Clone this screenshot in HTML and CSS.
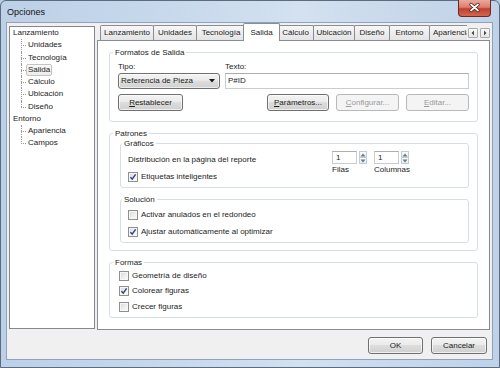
FILE: index.html
```html
<!DOCTYPE html>
<html lang="es">
<head>
<meta charset="utf-8">
<title>Opciones</title>
<link rel="stylesheet" href="styles.css">
</head>
<body>
<div class="window">
  <div class="titlebar">
    <span class="title">Opciones</span>
    <div class="close">
      <svg width="31" height="16" viewBox="0 0 31 16"><path d="M12 4.5 L19 10.5 M19 4.5 L12 10.5" stroke="#4a1a14" stroke-width="3.4" stroke-linecap="round"/><path d="M12 4.5 L19 10.5 M19 4.5 L12 10.5" stroke="#fff" stroke-width="1.8" stroke-linecap="round"/></svg>
    </div>
  </div>
  <div class="client">
    <div class="main">
      <div class="tree">
        <div class="node">Lanzamiento</div>
        <ul class="children">
          <li>Unidades</li>
          <li>Tecnología</li>
          <li><span class="sel">Salida</span></li>
          <li>Cálculo</li>
          <li>Ubicación</li>
          <li>Diseño</li>
        </ul>
        <div class="node">Entorno</div>
        <ul class="children">
          <li>Apariencia</li>
          <li>Campos</li>
        </ul>
      </div>
      <div class="tabctl">
        <div class="tabstrip">
          <div class="tabs">
            <div class="tab t-lan">Lanzamiento</div>
            <div class="tab t-uni">Unidades</div>
            <div class="tab t-tec">Tecnología</div>
            <div class="tab t-sal active">Salida</div>
            <div class="tab t-cal">Cálculo</div>
            <div class="tab t-ubi">Ubicación</div>
            <div class="tab t-dis">Diseño</div>
            <div class="tab t-ent">Entorno</div>
            <div class="tab t-apa">Apariencia</div>
          </div>
          <div class="scroll">
            <span class="sbtn"><svg width="8" height="8" viewBox="0 0 8 8"><path d="M5 1.5 L2.5 4 L5 6.5z" fill="#4a4a4a"/></svg></span>
            <span class="sbtn"><svg width="8" height="8" viewBox="0 0 8 8"><path d="M3 1.5 L5.5 4 L3 6.5z" fill="#4a4a4a"/></svg></span>
          </div>
        </div>
        <div class="panel">
          <div class="group g-formatos">
            <span class="gtitle">Formatos de Salida</span>
            <div class="row-labels">
              <span class="lbl-tipo">Tipo:</span>
              <span>Texto:</span>
            </div>
            <div class="row-inputs">
              <div class="combo">
                <span>Referencia de Pieza</span>
                <svg width="6" height="4" viewBox="0 0 6 4"><path d="M0 0 H6 L3 3.5z" fill="#1a1a1a"/></svg>
              </div>
              <div class="textbox">P#ID</div>
            </div>
            <div class="row-buttons">
              <div class="btn b-reset"><u>R</u>establecer</div>
              <div class="btn b-param"><u>P</u>arámetros...</div>
              <div class="btn disabled b-conf"><u>C</u>onfigurar...</div>
              <div class="btn disabled b-edit"><u>E</u>ditar...</div>
            </div>
          </div>

          <div class="group g-patrones">
            <span class="gtitle">Patrones</span>
            <div class="group g-graficos">
              <span class="gtitle">Gráficos</span>
              <div class="dist">
                <div>Distribución en la página del reporte</div>
                <div class="cbrow r-etiq">
                  <span class="cb checked"><svg width="8" height="8" viewBox="0 0 8 8"><path d="M1.4 4.1 L3.2 6.1 L6.6 1.4" fill="none" stroke="#2c3f7c" stroke-width="1.4"/></svg></span>
                  <span>Etiquetas inteligentes</span>
                </div>
              </div>
              <div class="spins">
                <div class="spin-group">
                  <div class="spinbox">
                    <div class="spin-input">1</div>
                    <div class="spin-arrows">
                      <span><svg width="6" height="4" viewBox="0 0 6 4"><path d="M3 0.5 L5.5 3.5 H0.5z" fill="#6a7a8c"/></svg></span>
                      <span><svg width="6" height="4" viewBox="0 0 6 4"><path d="M3 3.5 L5.5 0.5 H0.5z" fill="#6a7a8c"/></svg></span>
                    </div>
                  </div>
                  <div class="spin-label">Filas</div>
                </div>
                <div class="spin-group">
                  <div class="spinbox">
                    <div class="spin-input">1</div>
                    <div class="spin-arrows">
                      <span><svg width="6" height="4" viewBox="0 0 6 4"><path d="M3 0.5 L5.5 3.5 H0.5z" fill="#6a7a8c"/></svg></span>
                      <span><svg width="6" height="4" viewBox="0 0 6 4"><path d="M3 3.5 L5.5 0.5 H0.5z" fill="#6a7a8c"/></svg></span>
                    </div>
                  </div>
                  <div class="spin-label">Columnas</div>
                </div>
              </div>
            </div>
            <div class="group g-solucion">
              <span class="gtitle">Solución</span>
              <div class="cbrow">
                <span class="cb"></span>
                <span>Activar anulados en el redondeo</span>
              </div>
              <div class="cbrow r-second">
                <span class="cb checked"><svg width="8" height="8" viewBox="0 0 8 8"><path d="M1.4 4.1 L3.2 6.1 L6.6 1.4" fill="none" stroke="#2c3f7c" stroke-width="1.4"/></svg></span>
                <span>Ajustar automáticamente al optimizar</span>
              </div>
            </div>
          </div>

          <div class="group g-formas">
            <span class="gtitle">Formas</span>
            <div class="cbrow">
              <span class="cb"></span>
              <span>Geometría de diseño</span>
            </div>
            <div class="cbrow r-formas">
              <span class="cb checked"><svg width="8" height="8" viewBox="0 0 8 8"><path d="M1.4 4.1 L3.2 6.1 L6.6 1.4" fill="none" stroke="#2c3f7c" stroke-width="1.4"/></svg></span>
              <span>Colorear figuras</span>
            </div>
            <div class="cbrow r-formas">
              <span class="cb"></span>
              <span>Crecer figuras</span>
            </div>
          </div>
        </div>
      </div>
    </div>
    <div class="footer">
      <div class="btn b-ok">OK</div>
      <div class="btn b-cancel">Cancelar</div>
    </div>
  </div>
</div>
</body>
</html>
```

FILE: styles.css
```css
* { box-sizing: border-box; margin: 0; padding: 0; }
html, body { width: 500px; height: 368px; overflow: hidden; }
body {
  background: #b9cde4;
  font-family: "Liberation Sans", Arial, sans-serif;
  font-size: 8px;
  line-height: 10px;
  color: #1c1c1c;
}
.window {
  width: 500px;
  height: 368px;
  display: flex;
  flex-direction: column;
  background: linear-gradient(90deg, #bcd0e7 0%, #c8d9ec 35%, #d3e1f0 60%, #c9d9eb 80%, #bfd2e8 100%);
  border: 1px solid #5b6b80;
  border-radius: 6px 6px 0 0;
}
.titlebar {
  height: 22px;
  display: flex;
  align-items: center;
  justify-content: space-between;
  padding: 0 8px 0 6px;
}
.title { font-size: 9px; line-height: 12px; color: #111; }
.close {
  align-self: flex-start;
  margin-top: -1px;
  width: 33px;
  height: 17px;
  border: 1px solid #6b2b25;
  border-top: none;
  border-radius: 0 0 4px 4px;
  background: linear-gradient(#eaa99c 0%, #dc7e6f 45%, #c2402e 55%, #d7654f 100%);
  display: flex;
  justify-content: center;
}
.client {
  flex: 1;
  margin: 0 7px 8px 6px;
  background: #f0f0f0;
  box-shadow: 0 0 0 1px #8ea2ba;
  display: flex;
  flex-direction: column;
  padding: 0 2px;
}
.main { display: flex; gap: 2px; align-items: flex-start; }

/* tree */
.tree {
  width: 86px;
  height: 303px;
  margin-top: 3px;
  background: #fff;
  border: 1px solid #828790;
  padding-left: 3px;
}
.node { height: 12.25px; line-height: 12.25px; }
.children { list-style: none; padding-left: 15px; }
.children li { position: relative; height: 12.25px; line-height: 12.25px; }
.children li::before {
  content: "";
  position: absolute;
  left: -7px;
  top: 6px;
  width: 5px;
  border-top: 1px dotted #9a9a9a;
}
.children li::after {
  content: "";
  position: absolute;
  left: -7px;
  top: 0;
  bottom: 0;
  border-left: 1px dotted #9a9a9a;
}
.children li:last-child::after { bottom: 6px; }
.sel {
  display: inline-block;
  vertical-align: top;
  height: 12.25px;
  line-height: 10.25px;
  margin-left: -2px;
  padding: 0 1px;
  border: 1px solid #c4c4c4;
  border-radius: 2px;
  background: linear-gradient(#fafafa, #ececec);
}

/* tabs */
.tabctl { width: 393px; }
.tabstrip {
  display: flex;
  height: 18px;
  margin-bottom: -1px;
  position: relative;
  z-index: 1;
}
.tabs {
  flex: 1;
  display: flex;
  align-items: flex-start;
  padding-left: 3px;
  overflow: hidden;
}
.tab {
  flex: none;
  height: 15px;
  margin-top: 2px;
  margin-left: -1px;
  border: 1px solid #898c95;
  border-bottom: none;
  border-radius: 2px 2px 0 0;
  background: linear-gradient(#f7f7f7, #e4e4e4);
  text-align: center;
  line-height: 14px;
  white-space: nowrap;
  overflow: hidden;
}
.t-lan { width: 54px; margin-left: 0; }
.t-uni { width: 44px; }
.t-tec { width: 50px; }
.t-sal { width: 37px; }
.t-cal { width: 37px; }
.t-ubi { width: 42px; }
.t-dis { width: 36px; }
.t-ent { width: 41px; }
.t-apa { width: 48px; text-align: left; padding-left: 3px; }
.tab.active {
  height: 18px;
  margin-top: 0;
  margin-left: -3px;
  margin-right: -2px;
  background: #fff;
  position: relative;
  z-index: 1;
  line-height: 17px;
}
.scroll {
  width: 23px;
  display: flex;
  gap: 2px;
  padding: 5px 0 0 1px;
}
.sbtn {
  width: 10px;
  height: 10px;
  border: 1px solid #a7abb0;
  border-radius: 1px;
  background: linear-gradient(#fbfbfb, #e6e6e6);
  display: flex;
  align-items: center;
  justify-content: center;
}

.panel {
  height: 290px;
  background: #fff;
  border: 1px solid #898c95;
  padding: 11px 11px 0 11px;
}

/* group boxes */
.group {
  position: relative;
  border: 1px solid #d5dfe5;
  border-radius: 3px;
}
.gtitle {
  position: absolute;
  top: -6px;
  left: 3px;
  padding: 0 2px;
  background: #fff;
  line-height: 11px;
}
.group .group .gtitle { left: 1px; }

.g-formatos { height: 70px; padding: 9px 8px 0 8px; }
.row-labels { display: flex; height: 10px; }
.lbl-tipo { width: 107px; }
.row-inputs { display: flex; gap: 5px; height: 16px; margin-top: 1px; }
.combo {
  width: 102px;
  height: 16px;
  border: 1px solid #707070;
  border-radius: 3px;
  background: linear-gradient(#f3f3f3 0%, #ebebeb 45%, #dddddd 50%, #d1d1d1 100%);
  box-shadow: inset 0 0 0 1px rgba(255,255,255,0.6);
  display: flex;
  align-items: center;
  justify-content: space-between;
  padding: 0 4px 0 2px;
  line-height: 14px;
}
.textbox {
  flex: 1;
  height: 16px;
  border: 1px solid #c9ccd3;
  border-top-color: #abadb3;
  background: #fff;
  padding-left: 2px;
  line-height: 14px;
}
.row-buttons { display: flex; gap: 7px; margin-top: 5px; }
.btn {
  height: 17px;
  border: 1px solid #707070;
  border-radius: 3px;
  background: linear-gradient(#f3f3f3 0%, #ebebeb 45%, #dddddd 50%, #cfcfcf 100%);
  box-shadow: inset 0 0 0 1px rgba(255,255,255,0.65);
  text-align: center;
  line-height: 15px;
}
.btn.disabled {
  border-color: #b5b9bc;
  background: #f4f4f4;
  box-shadow: none;
  color: #9a9a9a;
}
.b-reset { width: 65px; margin-right: auto; }
.b-param { width: 62px; }
.b-conf { width: 63px; }
.b-edit { width: 63px; }

.g-patrones { height: 118px; margin-top: 11px; padding: 9px 8px 0 10px; }
.g-graficos { height: 45px; padding: 7px 0 0 7px; display: flex; }
.dist { width: 204px; margin-top: 4px; }
.r-etiq { margin-top: 6px; }
.spins { display: flex; gap: 7px; }
.spin-group { width: 35px; }
.spinbox { display: flex; gap: 2px; height: 13px; }
.spin-input {
  width: 25px;
  height: 13px;
  border: 1px solid #c9ccd3;
  border-top-color: #abadb3;
  background: #fff;
  padding-left: 3px;
  line-height: 11px;
}
.spin-arrows {
  width: 8px;
  height: 13px;
  display: flex;
  flex-direction: column;
}
.spin-arrows span {
  flex: 1;
  border: 1px solid #c3ccd6;
  background: linear-gradient(#fbfcfd, #e8ecf0);
  display: flex;
  align-items: center;
  justify-content: center;
}
.spin-arrows span + span { border-top: none; }
.spin-label { margin-top: 1px; line-height: 10px; }

.g-solucion { height: 44px; margin-top: 11px; padding: 9px 0 0 7px; }
.r-second { margin-top: 6px; }

.g-formas { height: 56px; margin-top: 11px; padding: 7px 0 0 9px; }
.r-formas { margin-top: 4.5px; }

.cbrow { display: flex; align-items: center; height: 11px; }
.cb {
  flex: none;
  width: 10px;
  height: 10px;
  margin-right: 3px;
  border: 1px solid #8e8f8f;
  background: linear-gradient(135deg, #d8d8d8 0%, #f0f0f0 60%, #fdfdfd 100%);
  box-shadow: inset 0 0 0 1px #f6f6f6;
  display: flex;
  align-items: center;
  justify-content: center;
}

.footer {
  display: flex;
  justify-content: flex-end;
  gap: 8px;
  margin-top: 7px;
  padding-right: 3px;
}
.b-ok { width: 55px; }
.b-cancel { width: 56px; }
```
